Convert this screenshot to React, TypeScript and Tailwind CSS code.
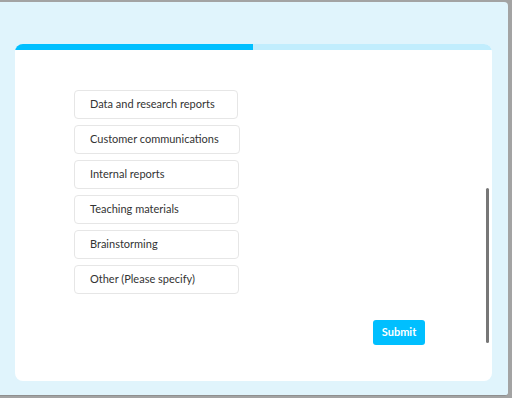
import React from "react";

const items = [
  "Data and research reports",
  "Customer communications",
  "Internal reports",
  "Teaching materials",
  "Brainstorming",
  "Other (Please specify)",
];

export default function App() {
  return (
    <div
      className="w-[512px] h-[398px] bg-[#a3a3a3] pt-[2px] pr-[4px] pb-[2px] overflow-hidden"
      style={{ fontFamily: 'Lato, "Noto Sans", sans-serif' }}
    >
      <div className="h-[394px] bg-[#e0f4fc] rounded-tr-[4px] rounded-br-[3px] border-b border-[#8f8f8f] pt-[42px] pl-[15px] pr-[16px] pb-[13px]">
        <div className="h-[337px] bg-white rounded-[8px] overflow-hidden flex flex-col">
          <div className="h-[6px] flex bg-[#c1edfd] shrink-0">
            <div className="w-[238px] bg-[#00bfff]" />
          </div>
          <div className="flex-1 flex">
            <div className="flex-1 flex flex-col pl-[59px] pt-[40px]">
              <div className="flex flex-col gap-[6px]">
                {items.map((t, i) => (
                  <div
                    key={t}
                    className={`${i === 1 ? "w-[166px]" : i === 0 ? "w-[164px]" : "w-[165px]"} h-[29px] border border-[#e6e6e6] rounded-[4px] flex items-center pl-[15px] text-[11px] text-[#333]`}
                  >
                    {t}
                  </div>
                ))}
              </div>
              <div className="flex justify-end pr-[57px] mt-[26px]">
                <button className="w-[52px] h-[25px] bg-[#00bfff] rounded-[3px] text-white text-[11px] font-bold">
                  Submit
                </button>
              </div>
            </div>
            <div className="w-[10px] flex flex-col pt-[138px]">
              <div className="w-[3px] h-[155px] bg-[#777] rounded-full ml-[4px]" />
            </div>
          </div>
        </div>
      </div>
    </div>
  );
}
